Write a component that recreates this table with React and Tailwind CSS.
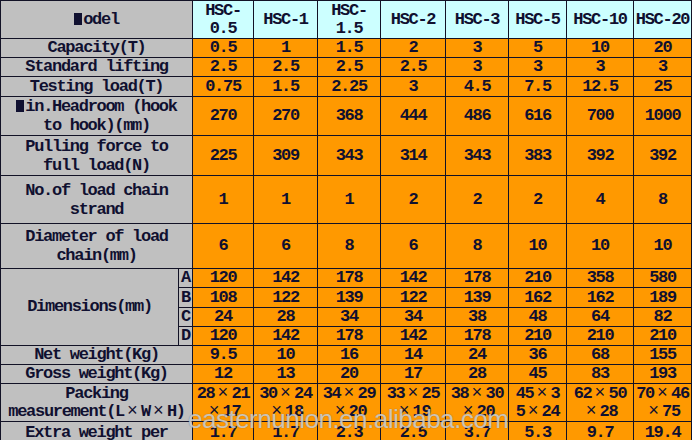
import React from "react";

const X = () => (
  <span className="inline-block w-[17px] text-center font-normal text-[18px] leading-[14px] tracking-normal">×</span>
);

const Blk = () => (
  <span className="inline-block w-[8px] h-[12px] bg-[#101030] align-[-1px] mr-px" />
);

const rows = [
  { h: "h-[18px]", label: "Capacity(T)", v: ["0.5", "1", "1.5", "2", "3", "5", "10", "20"] },
  { h: "h-[18px]", label: "Standard lifting", v: ["2.5", "2.5", "2.5", "2.5", "3", "3", "3", "3"] },
  { h: "h-[19px]", label: "Testing load(T)", v: ["0.75", "1.5", "2.25", "3", "4.5", "7.5", "12.5", "25"] },
  {
    h: "h-[38px]",
    two: true,
    label: (
      <>
        <Blk />in.Headroom (hook
        <br />
        to hook)(mm)
      </>
    ),
    v: ["270", "270", "368", "444", "486", "616", "700", "1000"],
  },
  {
    h: "h-[39px]",
    two: true,
    label: (
      <>
        Pulling force to
        <br />
        full load(N)
      </>
    ),
    v: ["225", "309", "343", "314", "343", "383", "392", "392"],
  },
  {
    h: "h-[47px]",
    two: true,
    label: (
      <>
        No.of load chain
        <br />
        strand
      </>
    ),
    v: ["1", "1", "1", "2", "2", "2", "4", "8"],
  },
  {
    h: "h-[44px]",
    two: true,
    label: (
      <>
        Diameter of load
        <br />
        chain(mm)
      </>
    ),
    v: ["6", "6", "8", "6", "8", "10", "10", "10"],
  },
];

const dims = [
  { k: "A", h: "h-[18px]", v: ["120", "142", "178", "142", "178", "210", "358", "580"] },
  { k: "B", h: "h-[19px]", v: ["108", "122", "139", "122", "139", "162", "162", "189"] },
  { k: "C", h: "h-[18px]", v: ["24", "28", "34", "34", "38", "48", "64", "82"] },
  { k: "D", h: "h-[18px]", v: ["120", "142", "178", "142", "178", "210", "210", "210"] },
];

const rows2 = [
  { h: "h-[18px]", label: "Net weight(Kg)", v: ["9.5", "10", "16", "14", "24", "36", "68", "155"] },
  { h: "h-[18px]", label: "Gross weight(Kg)", v: ["12", "13", "20", "17", "28", "45", "83", "193"] },
];

const packing = [
  ["28", "21", "17"],
  ["30", "24", "18"],
  ["34", "29", "20"],
  ["33", "25", "19"],
  ["38", "30", "20"],
  null,
  ["62", "50", "28"],
  ["70", "46", "75"],
];

const extra = ["1.7", "1.7", "2.3", "2.5", "3.7", "5.3", "9.7", "19.4"];

const lab = "bg-[#c0c0c0] p-0 text-center align-middle";
const val = "bg-[#ff9900] p-0 text-center align-middle";
const head = "bg-[#ccffff] p-0 text-center align-middle leading-[18px]";

export default function App() {
  return (
    <div className="relative w-[692px] h-[440px] overflow-hidden bg-white">
      <table className="table-fixed border-separate border-spacing-px bg-[#121226] w-[692px] font-['Liberation_Mono',monospace] font-bold text-[17px] leading-[16px] tracking-[-1.3px] text-[#101030]">
        <colgroup>
          <col className="w-[177px]" />
          <col className="w-[13px]" />
          <col className="w-[60px]" />
          <col className="w-[63px]" />
          <col className="w-[62px]" />
          <col className="w-[64px]" />
          <col className="w-[62px]" />
          <col className="w-[57px]" />
          <col className="w-[66px]" />
          <col className="w-[57px]" />
        </colgroup>
        <tbody>
          <tr>
            <td colSpan={2} className={`${lab} h-[37px]`}>
              <Blk />odel
            </td>
            <td className={head}>
              HSC-
              <br />
              0.5
            </td>
            <td className={head}>HSC-1</td>
            <td className={head}>
              HSC-
              <br />
              1.5
            </td>
            <td className={head}>HSC-2</td>
            <td className={head}>HSC-3</td>
            <td className={head}>HSC-5</td>
            <td className={head}>HSC-10</td>
            <td className={head}>HSC-20</td>
          </tr>
          {rows.map((r, i) => (
            <tr key={i}>
              <td colSpan={2} className={`${lab} ${r.h} ${r.two ? "leading-[19px]" : ""}`}>
                {r.label}
              </td>
              {r.v.map((x, j) => (
                <td key={j} className={val}>
                  {x}
                </td>
              ))}
            </tr>
          ))}
          {dims.map((r, i) => (
            <tr key={r.k}>
              {i === 0 && (
                <td rowSpan={4} className={lab}>
                  Dimensions(mm)
                </td>
              )}
              <td className={`${lab} ${r.h}`}>{r.k}</td>
              {r.v.map((x, j) => (
                <td key={j} className={val}>
                  {x}
                </td>
              ))}
            </tr>
          ))}
          {rows2.map((r, i) => (
            <tr key={i}>
              <td colSpan={2} className={`${lab} ${r.h}`}>
                {r.label}
              </td>
              {r.v.map((x, j) => (
                <td key={j} className={val}>
                  {x}
                </td>
              ))}
            </tr>
          ))}
          <tr>
            <td colSpan={2} className={`${lab} h-[37px] leading-[18px]`}>
              Packing
              <br />
              measurement(L<X />W<X />H)
            </td>
            {packing.map((p, j) => (
              <td key={j} className={`${val} leading-[18px]`}>
                {p ? (
                  <>
                    {p[0]}
                    <X />
                    {p[1]}
                    <br />
                    <X />
                    {p[2]}
                  </>
                ) : (
                  <>
                    45<X />3
                    <br />
                    5<X />24
                  </>
                )}
              </td>
            ))}
          </tr>
          <tr>
            <td colSpan={2} className={`${lab} h-[19px] align-top pt-[3px]`}>
              Extra weight per
            </td>
            {extra.map((x, j) => (
              <td key={j} className={`${val} align-top pt-[3px]`}>
                {x}
              </td>
            ))}
          </tr>
        </tbody>
      </table>
      <div className="absolute left-[188px] top-[406px] font-['Liberation_Sans',Arial,sans-serif] text-[26px] leading-none tracking-[-0.5px] text-[rgba(235,235,235,0.72)] [text-shadow:0_0_1px_rgba(70,70,70,0.7)] whitespace-nowrap pointer-events-none">
        easternunion.en.alibaba.com
      </div>
    </div>
  );
}
